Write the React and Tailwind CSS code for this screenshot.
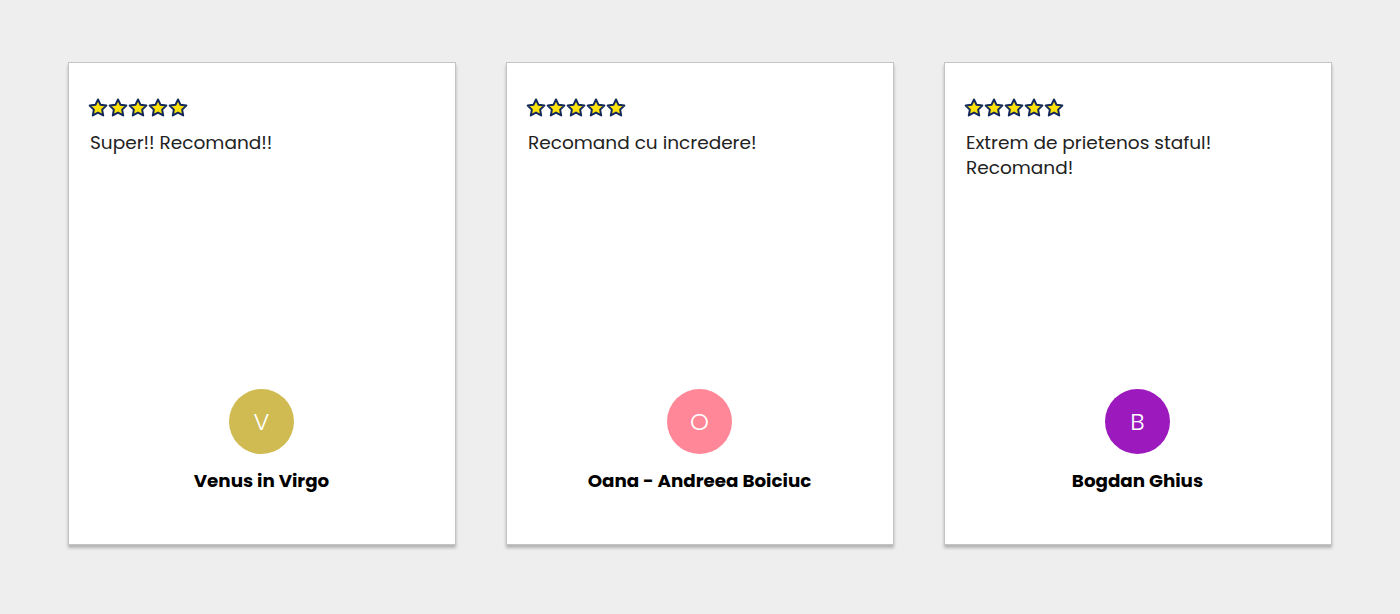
import React from 'react';

const reviews = [
    { id: 1, text: 'Super!! Recomand!!', name: 'Venus in Virgo', letter: 'V', color: 'bg-[#cfbb52]' },
    { id: 2, text: 'Recomand cu incredere!', name: 'Oana - Andreea Boiciuc', letter: 'O', color: 'bg-[#ff8797]' },
    { id: 3, text: 'Extrem de prietenos staful! Recomand!', name: 'Bogdan Ghius', letter: 'B', color: 'bg-[#9c19bd]' },
];

const Star = () => (
    <svg width="20" height="19" viewBox="0 0 24 23">
        <path
            d="M12 1.8l3.1 6.5 7 .9-5.1 4.9 1.3 7-6.3-3.4-6.3 3.4 1.3-7L1.9 9.2l7-.9z"
            fill="#ffe20a"
            stroke="#13295b"
            strokeWidth="2.4"
            strokeLinejoin="round"
        />
    </svg>
);

const ReviewCard = ({ review }) => {
    return (
        <div className="w-[388px] h-[483px] bg-white border border-[#c4c4c4] shadow-[0_3px_3px_rgba(0,0,0,0.25)] flex flex-col justify-between px-[20px] pt-[35px] pb-[51px]">
            <div>
                <div className="flex -ml-[1px]">
                    {[0, 1, 2, 3, 4].map((i) => (
                        <Star key={i} />
                    ))}
                </div>
                <p className="mt-[13px] pl-[1px] text-[18.5px] leading-[25px] text-[#222] pr-[96px]">{review.text}</p>
            </div>

            {/* reviewer */}
            <div className="flex flex-col items-center -ml-[1px]">
                <div className={`w-[65px] h-[65px] rounded-full ${review.color} flex items-center justify-center text-white text-[24px] font-light`}>
                    {review.letter}
                </div>
                <div className="mt-[15px] text-[18.3px] leading-[24px] font-bold text-black">{review.name}</div>
            </div>
        </div>
    );
};

export default function App() {
    return (
        <div
            className="min-h-[614px] bg-[#eeeeee] flex justify-center gap-[50px] pt-[62px]"
            style={{ fontFamily: '"Poppins", "DejaVu Sans", sans-serif' }}
        >
            {reviews.map((review) => (
                <ReviewCard key={review.id} review={review} />
            ))}
        </div>
    );
}
